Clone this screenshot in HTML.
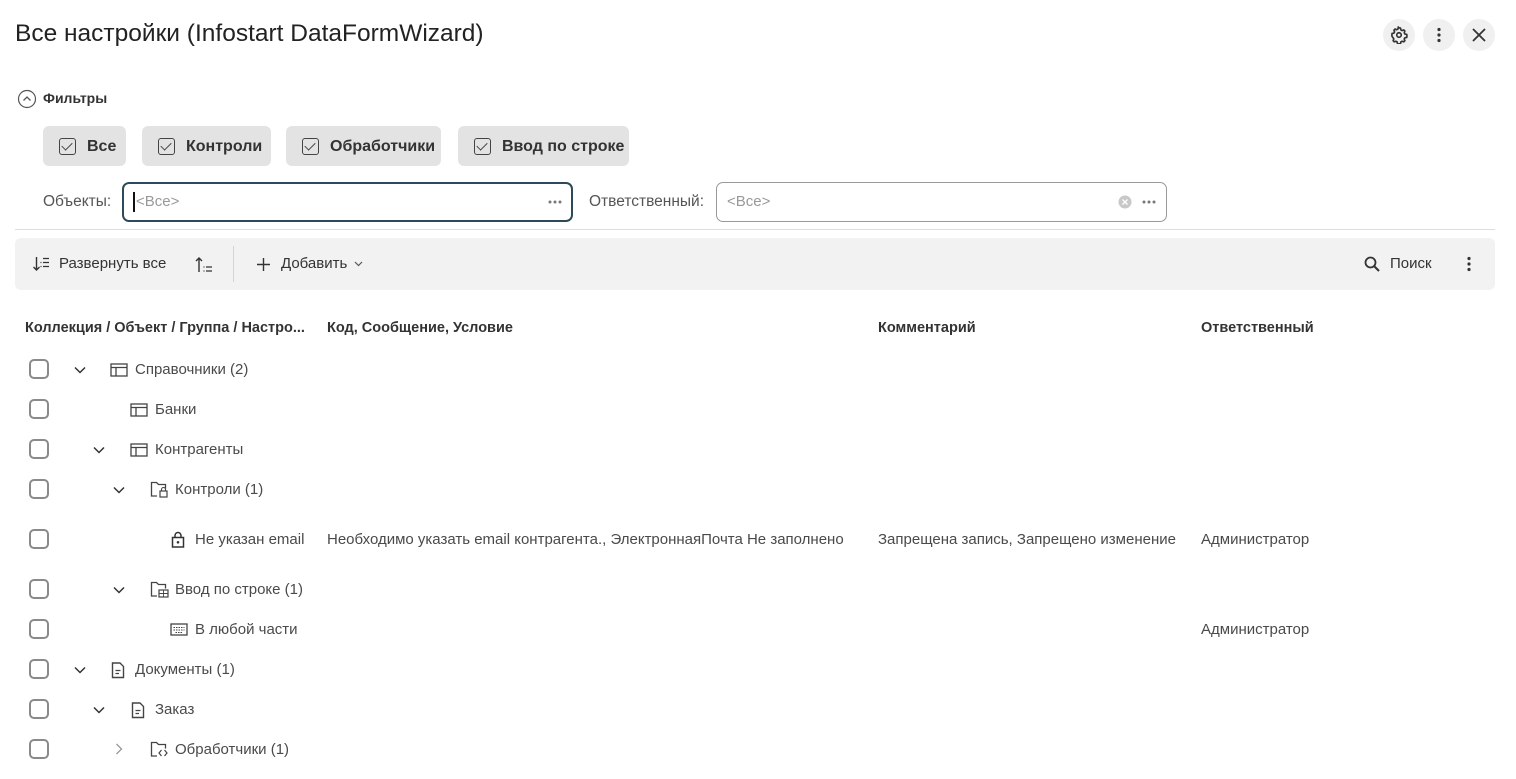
<!DOCTYPE html>
<html><head><meta charset="utf-8"><style>
*{box-sizing:border-box;margin:0;padding:0}
body{width:1516px;height:779px;background:#fff;font-family:"Liberation Sans",Arial,sans-serif;color:#333;font-size:14px;position:relative;overflow:hidden}
.a{position:absolute}
.t{position:absolute;white-space:nowrap;line-height:16px}
.r{font-size:15px;color:#4a4a4a;line-height:18px}
.cb{position:absolute;width:20px;height:20px;border:2px solid #8a8a8a;border-radius:5px;left:29px}
.chip{position:absolute;top:126px;height:40px;background:#e3e3e3;border-radius:6px;font-weight:bold;font-size:16px;color:#333}
.chip .bx{position:absolute;left:16px;top:12px;width:17px;height:17px;border:1.5px solid #444;border-radius:3px}
.chip .bx:after{content:"";position:absolute;left:4px;top:1px;width:5px;height:9px;border:solid #444;border-width:0 1.6px 1.6px 0;transform:rotate(45deg)}
.chip span{position:absolute;left:44px;top:12px}
.rb{position:absolute;top:19px;width:32px;height:32px;border-radius:50%;background:#f0f0f0}
svg{position:absolute}
</style></head><body>
<div class="t" style="left:15px;top:20px;font-size:24.5px;line-height:28px;color:#222">Все настройки (Infostart DataFormWizard)</div>
<div class="rb" style="left:1383px"></div><div class="rb" style="left:1423px"></div><div class="rb" style="left:1463px"></div>
<svg style="left:1390px;top:26px" width="18" height="18" viewBox="0 0 24 24"><path d="M12 2.5l2 .3.5 2.4 1.6.9 2.3-.8 1.4 1.5-.8 2.3.9 1.6 2.4.5.3 2-.3 2-2.4.5-.9 1.6.8 2.3-1.4 1.5-2.3-.8-1.6.9-.5 2.4-2 .3-2-.3-.5-2.4-1.6-.9-2.3.8-1.4-1.5.8-2.3-.9-1.6L2.8 14l-.3-2 .3-2 2.4-.5.9-1.6-.8-2.3 1.4-1.5 2.3.8 1.6-.9.5-2.4z" fill="none" stroke="#333" stroke-width="2.2"/><circle cx="12" cy="12" r="3" fill="none" stroke="#333" stroke-width="2.2"/></svg>
<svg style="left:1436px;top:27px" width="6" height="16"><circle cx="3" cy="2.5" r="1.6" fill="#333"/><circle cx="3" cy="8" r="1.6" fill="#333"/><circle cx="3" cy="13.5" r="1.6" fill="#333"/></svg>
<svg style="left:1472px;top:28px" width="14" height="14"><path d="M1 1L13 13M13 1L1 13" stroke="#333" stroke-width="1.8"/></svg>

<svg style="left:17px;top:89px" width="20" height="20"><circle cx="10" cy="10" r="8.5" fill="none" stroke="#555" stroke-width="1.2"/><path d="M6.5 11.5L10 8l3.5 3.5" fill="none" stroke="#555" stroke-width="1.3"/></svg>
<div class="t" style="left:43px;top:90px;font-weight:bold;font-size:14px">Фильтры</div>

<div class="chip" style="left:43px;width:83px"><div class="bx"></div><span>Все</span></div>
<div class="chip" style="left:142px;width:129px"><div class="bx"></div><span>Контроли</span></div>
<div class="chip" style="left:286px;width:155px"><div class="bx"></div><span>Обработчики</span></div>
<div class="chip" style="left:458px;width:171px"><div class="bx"></div><span>Ввод по строке</span></div>

<div class="t" style="left:43px;top:194px;font-size:15.5px;color:#555">Объекты:</div>
<div class="a" style="left:122px;top:182px;width:451px;height:40px;border:2px solid #2d4a5c;border-radius:7px"></div>
<div class="a" style="left:133px;top:192px;width:2px;height:20px;background:#111"></div>
<div class="t" style="left:136px;top:194px;font-size:15px;color:#999">&lt;Все&gt;</div>
<svg style="left:548px;top:200px" width="14" height="4"><circle cx="2" cy="2" r="1.5" fill="#777"/><circle cx="7" cy="2" r="1.5" fill="#777"/><circle cx="12" cy="2" r="1.5" fill="#777"/></svg>
<div class="t" style="left:589px;top:194px;font-size:15.5px;color:#555">Ответственный:</div>
<div class="a" style="left:716px;top:182px;width:451px;height:40px;border:1px solid #999;border-radius:7px"></div>
<div class="t" style="left:727px;top:194px;font-size:15px;color:#999">&lt;Все&gt;</div>
<svg style="left:1118px;top:195px" width="14" height="14"><circle cx="7" cy="7" r="6.5" fill="#c8c8c8"/><path d="M4.5 4.5l5 5M9.5 4.5l-5 5" stroke="#fff" stroke-width="1.4"/></svg>
<svg style="left:1142px;top:200px" width="14" height="4"><circle cx="2" cy="2" r="1.5" fill="#777"/><circle cx="7" cy="2" r="1.5" fill="#777"/><circle cx="12" cy="2" r="1.5" fill="#777"/></svg>

<div class="a" style="left:15px;top:229px;width:1480px;height:1px;background:#ddd"></div>
<div class="a" style="left:15px;top:238px;width:1480px;height:52px;background:#f2f2f2;border-radius:6px"></div>
<svg style="left:32px;top:256px" width="18" height="16"><path d="M4.5 1v13M1.5 11L4.5 14l3-3" fill="none" stroke="#333" stroke-width="1.4"/><path d="M11 2.5h6M11 6.5h6M11 10.5h6M8.5 6.5h1M8.5 10.5h1" stroke="#333" stroke-width="1.3"/></svg>
<div class="t" style="left:59px;top:256px;font-size:15px">Развернуть все</div>
<svg style="left:194px;top:256px" width="20" height="17"><path d="M5 16V2M2 5L5 2l3 3" fill="none" stroke="#333" stroke-width="1.4"/><path d="M12 11h6M12 15h6M9.5 11h1M9.5 15h1" stroke="#333" stroke-width="1.2"/></svg>
<div class="a" style="left:233px;top:246px;width:1px;height:36px;background:#d4d4d4"></div>
<svg style="left:257px;top:258px" width="13" height="13"><path d="M6.5 0v13M0 6.5h13" stroke="#333" stroke-width="1.4"/></svg>
<div class="t" style="left:281px;top:256px;font-size:15px">Добавить</div>
<svg style="left:354px;top:261px" width="9" height="6"><path d="M1 1l3.5 3.5L8 1" fill="none" stroke="#555" stroke-width="1.2"/></svg>
<svg style="left:1364px;top:256px" width="16" height="16"><circle cx="6.5" cy="6.5" r="5" fill="none" stroke="#333" stroke-width="1.8"/><path d="M10 10l5 5" stroke="#333" stroke-width="2"/></svg>
<div class="t" style="left:1390px;top:256px;font-size:15px">Поиск</div>
<svg style="left:1466px;top:256px" width="6" height="16"><circle cx="3" cy="2.5" r="1.6" fill="#333"/><circle cx="3" cy="8" r="1.6" fill="#333"/><circle cx="3" cy="13.5" r="1.6" fill="#333"/></svg>

<div class="t" style="left:25px;top:320px;font-weight:bold;font-size:14.5px">Коллекция / Объект / Группа / Настро...</div>
<div class="t" style="left:327px;top:320px;font-weight:bold;font-size:14.5px">Код, Сообщение, Условие</div>
<div class="t" style="left:878px;top:320px;font-weight:bold;font-size:14.5px">Комментарий</div>
<div class="t" style="left:1201px;top:320px;font-weight:bold;font-size:14.5px">Ответственный</div>

<div class="cb" style="top:359px"></div><div class="cb" style="top:399px"></div><div class="cb" style="top:439px"></div><div class="cb" style="top:479px"></div><div class="cb" style="top:529px"></div><div class="cb" style="top:579px"></div><div class="cb" style="top:619px"></div><div class="cb" style="top:659px"></div><div class="cb" style="top:699px"></div><div class="cb" style="top:739px"></div>

<svg style="left:74px;top:366px" width="12" height="8"><path d="M1 1.5l5 5 5-5" fill="none" stroke="#333" stroke-width="1.5"/></svg>
<svg style="left:93px;top:446px" width="12" height="8"><path d="M1 1.5l5 5 5-5" fill="none" stroke="#333" stroke-width="1.5"/></svg>
<svg style="left:113px;top:486px" width="12" height="8"><path d="M1 1.5l5 5 5-5" fill="none" stroke="#333" stroke-width="1.5"/></svg>
<svg style="left:113px;top:586px" width="12" height="8"><path d="M1 1.5l5 5 5-5" fill="none" stroke="#333" stroke-width="1.5"/></svg>
<svg style="left:74px;top:666px" width="12" height="8"><path d="M1 1.5l5 5 5-5" fill="none" stroke="#333" stroke-width="1.5"/></svg>
<svg style="left:93px;top:706px" width="12" height="8"><path d="M1 1.5l5 5 5-5" fill="none" stroke="#333" stroke-width="1.5"/></svg>
<svg style="left:115px;top:743px" width="8" height="12"><path d="M1.5 1l5 5-5 5" fill="none" stroke="#999" stroke-width="1.3"/></svg>

<svg style="left:110px;top:363px" width="18" height="14"><rect x="1" y="1" width="16" height="12" fill="none" stroke="#444" stroke-width="1.3"/><path d="M1 4.5h16M6 4.5v8.5" stroke="#444" stroke-width="1.3"/></svg>
<svg style="left:130px;top:403px" width="18" height="14"><rect x="1" y="1" width="16" height="12" fill="none" stroke="#444" stroke-width="1.3"/><path d="M1 4.5h16M6 4.5v8.5" stroke="#444" stroke-width="1.3"/></svg>
<svg style="left:130px;top:443px" width="18" height="14"><rect x="1" y="1" width="16" height="12" fill="none" stroke="#444" stroke-width="1.3"/><path d="M1 4.5h16M6 4.5v8.5" stroke="#444" stroke-width="1.3"/></svg>
<svg style="left:150px;top:481px" width="19" height="17"><path d="M7 15H1.5V1.5h5l2 2h7v4" fill="none" stroke="#444" stroke-width="1.3"/><rect x="10" y="10" width="7" height="6" fill="none" stroke="#444" stroke-width="1.2"/><path d="M11.5 10V8.5a2 2 0 0 1 4 0V10" fill="none" stroke="#444" stroke-width="1.1"/></svg>
<svg style="left:150px;top:581px" width="19" height="17"><path d="M7 15H1.5V1.5h5l2 2h7v4" fill="none" stroke="#444" stroke-width="1.3"/><rect x="9" y="9" width="9" height="7" fill="none" stroke="#444" stroke-width="1.2"/><path d="M9 12.5h9M13.5 9v7" stroke="#444" stroke-width="0.9"/></svg>
<svg style="left:150px;top:741px" width="19" height="17"><path d="M7 15H1.5V1.5h5l2 2h7v4" fill="none" stroke="#444" stroke-width="1.3"/><path d="M11.5 9l-2.5 3 2.5 3M14.5 9l2.5 3-2.5 3" fill="none" stroke="#444" stroke-width="1.2"/></svg>
<svg style="left:171px;top:531px" width="14" height="17"><rect x="1.5" y="6.5" width="11" height="9.5" fill="none" stroke="#333" stroke-width="1.5"/><path d="M4 6.5V4.5a3 3 0 0 1 6 0V6.5" fill="none" stroke="#333" stroke-width="1.5"/><circle cx="7" cy="11.3" r="1.3" fill="#333"/></svg>
<svg style="left:170px;top:623px" width="18" height="13"><rect x="1" y="1" width="16" height="11" fill="none" stroke="#444" stroke-width="1.3"/><path d="M3.5 4.5h11M3.5 7h11M5.5 9.5h7" stroke="#444" stroke-width="1.1" stroke-dasharray="1.5 1"/></svg>
<svg style="left:111px;top:662px" width="14" height="17"><path d="M1.5 1h7.5l3.5 3.5v11h-11z" fill="none" stroke="#444" stroke-width="1.4"/><path d="M4.5 8.5h5M4.5 11.5h3.5" stroke="#444" stroke-width="1.3"/></svg>
<svg style="left:131px;top:702px" width="14" height="17"><path d="M1.5 1h7.5l3.5 3.5v11h-11z" fill="none" stroke="#444" stroke-width="1.4"/><path d="M4.5 8.5h5M4.5 11.5h3.5" stroke="#444" stroke-width="1.3"/></svg>

<div class="t r" style="left:135px;top:361px">Справочники (2)</div>
<div class="t r" style="left:155px;top:401px">Банки</div>
<div class="t r" style="left:155px;top:441px">Контрагенты</div>
<div class="t r" style="left:175px;top:481px">Контроли (1)</div>
<div class="t r" style="left:195px;top:531px">Не указан email</div>
<div class="t r" style="left:327px;top:531px">Необходимо указать email контрагента., ЭлектроннаяПочта Не заполнено</div>
<div class="t r" style="left:878px;top:531px">Запрещена запись, Запрещено изменение</div>
<div class="t r" style="left:1201px;top:531px">Администратор</div>
<div class="t r" style="left:175px;top:581px">Ввод по строке (1)</div>
<div class="t r" style="left:195px;top:621px">В любой части</div>
<div class="t r" style="left:1201px;top:621px">Администратор</div>
<div class="t r" style="left:135px;top:661px">Документы (1)</div>
<div class="t r" style="left:155px;top:701px">Заказ</div>
<div class="t r" style="left:175px;top:741px">Обработчики (1)</div>
</body></html>
